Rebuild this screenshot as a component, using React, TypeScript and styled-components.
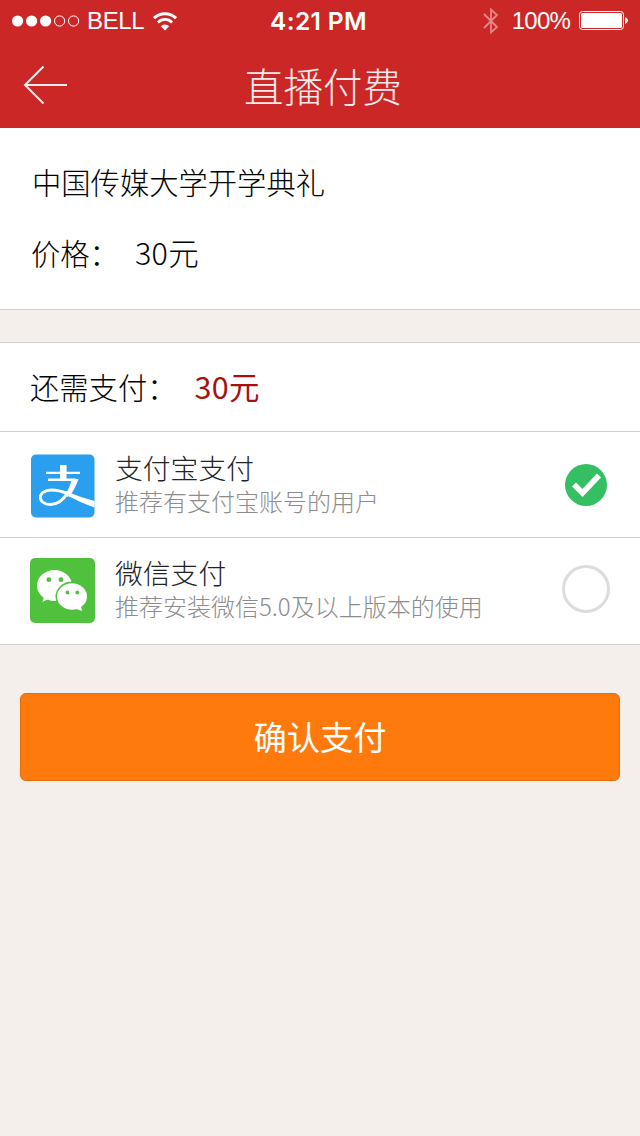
import React, { useState } from "react";
import styled, { createGlobalStyle } from "styled-components";

const GlobalStyle = createGlobalStyle`
  * { box-sizing: border-box; }
  body { margin: 0; background: #f5efeb; }
`;

const cjk = `"Noto Sans CJK SC", sans-serif`;

const Screen = styled.main`
  display: flex;
  flex-direction: column;
  width: 640px;
  height: 1136px;
  background: #f5efeb;
  font-family: ${cjk};
  font-weight: 300;
  overflow: hidden;
`;

const Top = styled.header`
  height: 128px;
  background: #cc2727;
  color: #fff;
`;

const StatusBar = styled.div`
  display: grid;
  grid-template-columns: 1fr auto 1fr;
  align-items: center;
  height: 40px;
  padding: 1px 12px 0 12px;
  font-family: "Liberation Sans", Arial, sans-serif;
  font-size: 24px;
  font-weight: 400;
  line-height: 40px;
`;

const StatusGroup = styled.div<{ $end?: boolean }>`
  display: flex;
  align-items: center;
  justify-content: ${(p) => (p.$end ? "flex-end" : "flex-start")};
  height: 40px;
`;

const Carrier = styled.span`
  margin: 0 9px 0 7px;
  font-size: 24px;
  letter-spacing: -0.35px;
`;

const Clock = styled.span`
  margin-right: 3px;
  font-family: Inter, "Liberation Sans", sans-serif;
  font-weight: 600;
  font-size: 24.5px;
  letter-spacing: 0.35px;
`;

const Percent = styled.span`
  margin: 0 9px 0 13px;
  letter-spacing: -0.8px;
`;

const NavBar = styled.div`
  display: grid;
  grid-template-columns: 44px 1fr 44px;
  align-items: center;
  height: 88px;
  padding: 0 23px;
`;

const BackButton = styled.button`
  display: flex;
  margin-top: 2px;
  padding: 0;
  border: 0;
  background: none;
`;

const Title = styled.h1`
  margin: 2px 0 0 6px;
  color: #f3ebeb;
  font-size: 39.5px;
  font-weight: 300;
  line-height: 60px;
  text-align: center;
`;

const Product = styled.section`
  display: flex;
  flex-direction: column;
  gap: 26px;
  height: 182px;
  padding: 31px 32px 0;
  border-bottom: 1px solid #d2cecb;
  background: #fff;
`;

const Line = styled.div<{ $gap?: number; $shift?: number }>`
  display: flex;
  align-items: center;
  gap: ${(p) => p.$gap ?? 0}px;
  height: 45px;
  margin-left: ${(p) => p.$shift ?? 0}px;
  color: #000;
  font-size: 29.3px;
  line-height: 45px;
  white-space: nowrap;
`;

const Amount = styled.span<{ $due?: boolean }>`
  color: ${(p) => (p.$due ? "#a5120d" : "#000")};
  font-size: 30.5px;
  letter-spacing: 0.3px;
  font-weight: ${(p) => (p.$due ? 400 : 300)};
`;

const Payment = styled.section`
  margin-top: 32px;
  border-top: 1px solid #d2cecb;
  background: #fff;
`;

const Due = styled.div`
  display: flex;
  align-items: center;
  height: 89px;
  padding: 0 30px 2px;
  border-bottom: 1px solid #d0d0d0;
`;

const Method = styled.label<{ $tall?: boolean }>`
  display: flex;
  align-items: center;
  height: ${(p) => (p.$tall ? 107 : 106)}px;
  padding: 0 30px ${(p) => (p.$tall ? 3 : 0)}px;
  border-bottom: 1px solid #d0d0d0;
`;

const MethodText = styled.div`
  flex: 1;
  margin: -2px 0 0 20px;
  white-space: nowrap;
`;

const MethodName = styled.div`
  color: #222;
  font-size: 27.8px;
  line-height: 34px;
`;

const MethodHint = styled.div`
  color: #8c8c8c;
  font-size: 24px;
  line-height: 34px;
`;

const Radio = styled.input`
  position: absolute;
  opacity: 0;
`;

const Mark = styled.span`
  display: flex;
  justify-content: center;
  width: 48px;
`;

const Ring = styled.span`
  width: 48px;
  height: 48px;
  margin-bottom: 2px;
  border: 3px solid #dcdcdc;
  border-radius: 50%;
`;

const Confirm = styled.button`
  height: 88px;
  margin: 48px 20px 0;
  padding: 0 0 4px;
  border: 1px solid #e36c0b;
  border-radius: 6px;
  background: #ff7a0d;
  color: #fff;
  font-family: ${cjk};
  font-size: 33.3px;
  font-weight: 400;
`;

const Signal = () => (
  <svg width="68" height="12" viewBox="0 0 68 12" fill="#fff">
    {[5.6, 19.6, 33.6].map((x) => (
      <circle key={x} cx={x} cy="6" r="5.6" />
    ))}
    {[47.6, 61.6].map((x) => (
      <circle key={x} cx={x} cy="6" r="5.1" fill="none" stroke="#fff" />
    ))}
  </svg>
);

const Wifi = () => (
  <svg width="24" height="19" viewBox="0 0 24 19" fill="none" stroke="#fff">
    <path d="M1 6.2a15.6 15.6 0 0 1 22 0" strokeWidth="3" />
    <path d="M4.9 10.4a10 10 0 0 1 14.2 0" strokeWidth="2.8" />
    <path d="M12 18.5l-4.1-4.3a5.8 5.8 0 0 1 8.2 0z" fill="#fff" stroke="none" />
  </svg>
);

const Bluetooth = () => (
  <svg width="16" height="28" viewBox="0 0 16 28" fill="none" stroke="#e78787" strokeWidth="1.8">
    <path d="M1 7l13 13-6 5.5v-23L14 8 1 21" />
  </svg>
);

const Battery = () => (
  <svg width="49" height="20" viewBox="0 0 49 20">
    <rect x="0.5" y="0.5" width="44" height="18" rx="3" fill="none" stroke="#fff" />
    <rect x="2" y="2" width="41" height="15" rx="1.5" fill="#fff" />
    <path d="M46 6.2c3.8 1 3.8 5.8 0 6.8z" fill="#fff" />
  </svg>
);

const BackArrow = () => (
  <svg width="44" height="40" viewBox="0 0 44 40" fill="none" stroke="#f3ebeb" strokeWidth="2">
    <path d="M20.500 1.500L2 20l18.500 18.500M2 20h42" />
  </svg>
);

const AlipayLogo = () => (
  <svg width="65" height="65" viewBox="0 0 65 65">
    <rect x="1" y="1.500" width="63.500" height="63" rx="5" fill="#2a9ff0" />
    <g transform="translate(0 1.500)">
      <g fill="none" stroke="#fff">
        <path d="M16 18.400h34M18 25.200h28" strokeWidth="2.400" />
        <path d="M33.300 10.500v15" strokeWidth="6.500" />
        <path d="M38 37.500C34 44.500 28.500 50 20.500 50c-13.500 0-14-14.500 1-14.500 6 0 10.500 1.300 16 3.500" strokeWidth="2.800" />
      </g>
      <path d="M41.500 24.500h7c-2 6-4.500 10.500-7 14.500l-4.500 3.500-2-2c3-4.500 5.500-10 6.500-16z" fill="#fff" />
      <path d="M35 36.600c10 3.900 19 7.400 29.500 9.900v6.500c-10-3.500-19-8-29-12.500z" fill="#fff" />
    </g>
  </svg>
);

const WechatLogo = () => (
  <svg width="65" height="65" viewBox="0 0 65 65">
    <rect width="65" height="65" rx="5" fill="#4fc13c" />
    <ellipse cx="24.500" cy="27.500" rx="17.500" ry="15.500" fill="#fff" />
    <path d="M14.500 36.500L12.500 44l8.500-4.500z" fill="#fff" />
    <ellipse cx="42" cy="38.500" rx="16.500" ry="15" fill="#4fc13c" />
    <ellipse cx="42" cy="38.500" rx="15" ry="13.200" fill="#fff" />
    <path d="M45 50.500l7 2.500-1.500-7z" fill="#fff" />
    <g fill="#4fc13c">
      <circle cx="18.800" cy="21.700" r="2.400" />
      <circle cx="31" cy="21.700" r="2.400" />
      <circle cx="37.500" cy="34.500" r="1.900" />
      <circle cx="47.300" cy="34.500" r="1.900" />
    </g>
  </svg>
);

const Checked = () => (
  <svg width="42" height="42" viewBox="0 0 42 42">
    <circle cx="21" cy="21" r="21" fill="#34c062" />
    <path d="M9 20.500l8.500 8.500L34 11.500" fill="none" stroke="#fff" strokeWidth="5.500" />
  </svg>
);

const LogoBox = styled.span`
  display: flex;
  margin-top: 2px;
`;

const methods = [
  { id: "alipay", name: "支付宝支付", hint: "推荐有支付宝账号的用户", Logo: AlipayLogo },
  { id: "wechat", name: "微信支付", hint: "推荐安装微信5.0及以上版本的使用", Logo: WechatLogo },
];

export default function App() {
  const [selected, setSelected] = useState("alipay");
  return (
    <Screen>
      <GlobalStyle />
      <Top>
        <StatusBar>
          <StatusGroup>
            <Signal />
            <Carrier>BELL</Carrier>
            <Wifi />
          </StatusGroup>
          <Clock>4:21 PM</Clock>
          <StatusGroup $end>
            <Bluetooth />
            <Percent>100%</Percent>
            <Battery />
          </StatusGroup>
        </StatusBar>
        <NavBar>
          <BackButton aria-label="返回">
            <BackArrow />
          </BackButton>
          <Title>直播付费</Title>
        </NavBar>
      </Top>
      <Product>
        <Line>中国传媒大学开学典礼</Line>
        <Line $gap={16} $shift={-1}>
          <span>价格：</span>
          <Amount>30元</Amount>
        </Line>
      </Product>
      <Payment>
        <Due>
          <Line $gap={18}>
            <span>还需支付：</span>
            <Amount $due>30元</Amount>
          </Line>
        </Due>
        {methods.map(({ id, name, hint, Logo }, i) => (
          <Method key={id} $tall={i > 0}>
            <Radio type="radio" name="method" checked={selected === id} onChange={() => setSelected(id)} />
            <LogoBox>
              <Logo />
            </LogoBox>
            <MethodText>
              <MethodName>{name}</MethodName>
              <MethodHint>{hint}</MethodHint>
            </MethodText>
            <Mark>{selected === id ? <Checked /> : <Ring />}</Mark>
          </Method>
        ))}
      </Payment>
      <Confirm>确认支付</Confirm>
    </Screen>
  );
}
